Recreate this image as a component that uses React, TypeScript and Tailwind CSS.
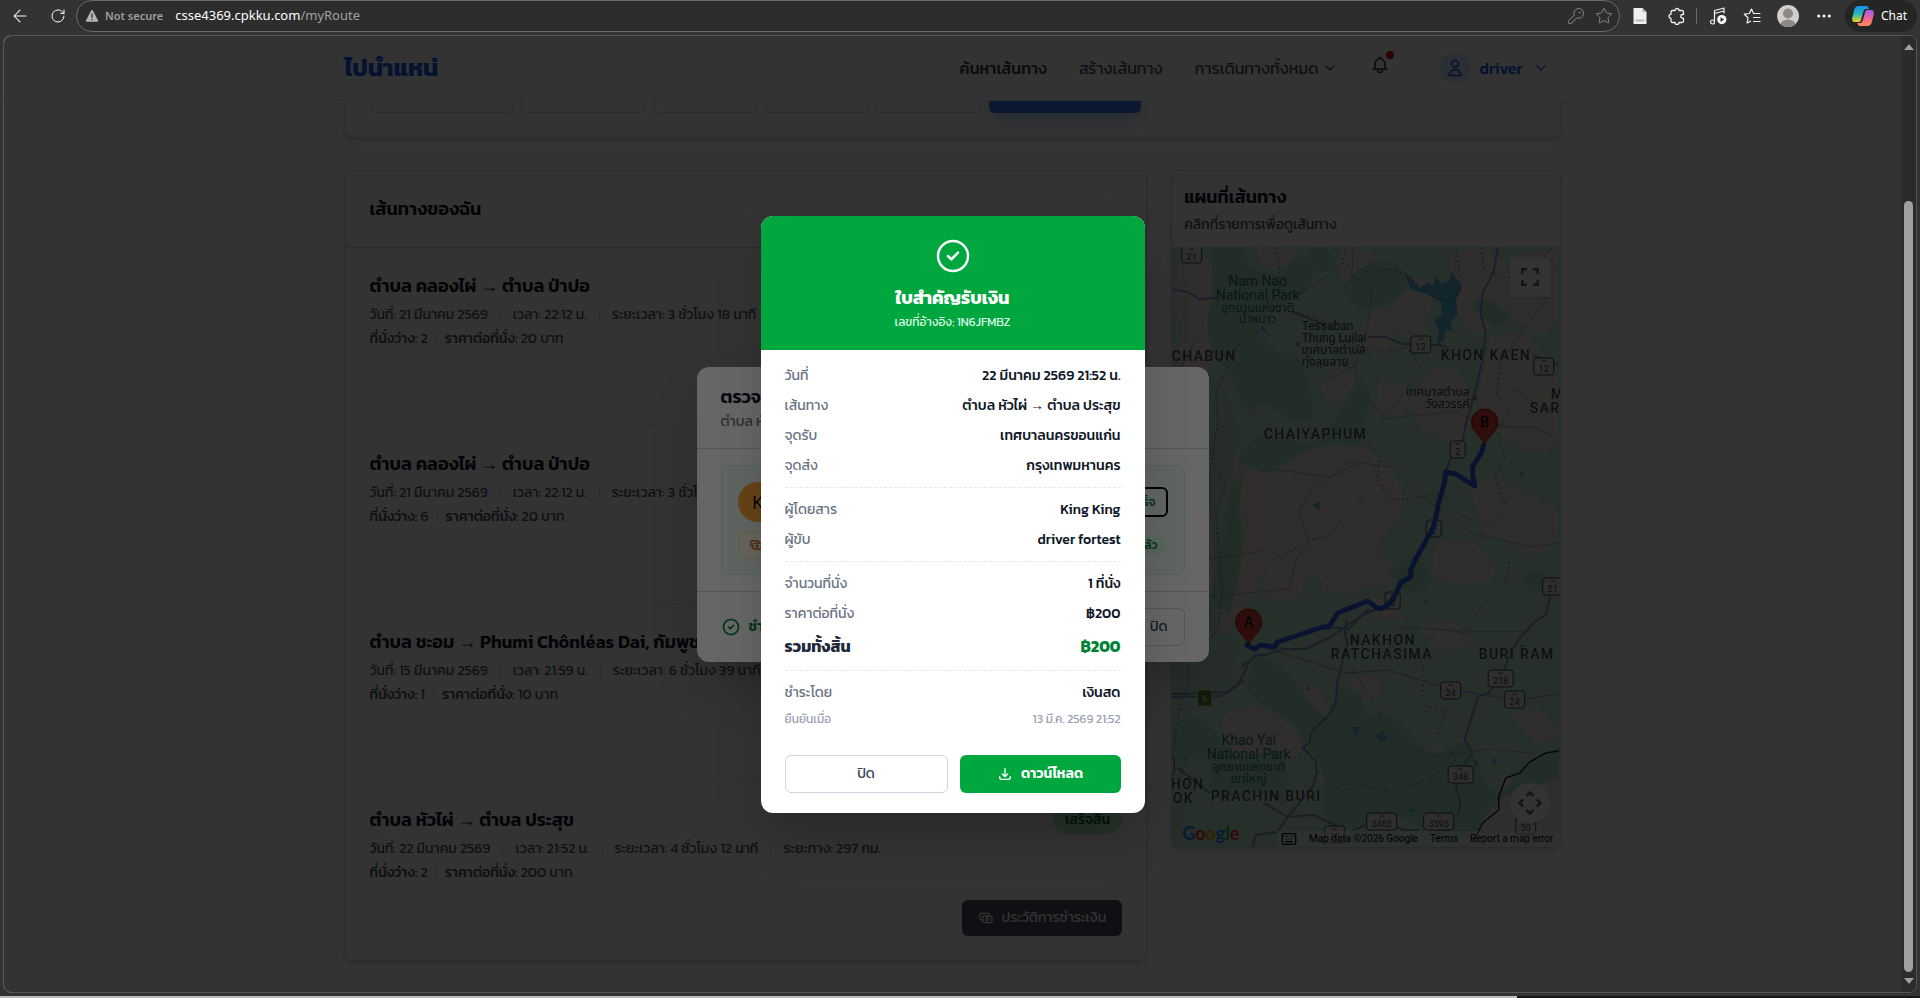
import type { ReactNode } from "react";
import {
  ArrowLeft,
  ChevronDown,
  Ellipsis,
  KeyRound,
  Keyboard,
  RotateCw,
  Star,
} from "lucide-react";

interface Trip {
  id: number;
  from: string;
  to: string;
  date: string;
  time: string;
  duration: string;
  distance: string;
  seats: number;
  price: number;
  done?: boolean;
}

const TRIPS: Trip[] = [
  { id: 1, from: "ตำบล คลองไผ่", to: "ตำบล ป่าปอ", date: "21 มีนาคม 2569", time: "22:12 น.", duration: "3 ชั่วโมง 18 นาที", distance: "", seats: 2, price: 20 },
  { id: 2, from: "ตำบล คลองไผ่", to: "ตำบล ป่าปอ", date: "21 มีนาคม 2569", time: "22:12 น.", duration: "3 ชั่วโมง 18 นาที", distance: "", seats: 6, price: 20 },
  { id: 3, from: "ตำบล ชะอม", to: "Phumi Chônléas Dai, กัมพูชา", date: "15 มีนาคม 2569", time: "21:59 น.", duration: "6 ชั่วโมง 39 นาที", distance: "", seats: 1, price: 10 },
  { id: 4, from: "ตำบล หัวไผ่", to: "ตำบล ประสุข", date: "22 มีนาคม 2569", time: "21:52 น.", duration: "4 ชั่วโมง 12 นาที", distance: "297 กม.", seats: 2, price: 200, done: true },
];

const ICONS = {
  check: "M9 12l2 2 4-4m6 2a9 9 0 11-18 0 9 9 0 0118 0z",
  bell: "M15 17h5l-1.405-1.405A2.032 2.032 0 0118 14.158V11a6.002 6.002 0 00-4-5.659V5a2 2 0 10-4 0v.341C7.67 6.165 6 8.388 6 11v3.159c0 .538-.214 1.055-.595 1.436L4 17h5m6 0v1a3 3 0 11-6 0v-1m6 0H9",
  user: "M16 7a4 4 0 11-8 0 4 4 0 018 0zM12 14a7 7 0 00-7 7h14a7 7 0 00-7-7z",
  cash: "M17 9V7a2 2 0 00-2-2H5a2 2 0 00-2 2v6a2 2 0 002 2h2m2 4h10a2 2 0 002-2v-6a2 2 0 00-2-2H9a2 2 0 00-2 2v6a2 2 0 002 2zm7-5a2 2 0 11-4 0 2 2 0 014 0z",
  download: "M4 16v1a3 3 0 003 3h10a3 3 0 003-3v-1m-4-4l-4 4m0 0l-4-4m4 4V4",
};

function Icon({ name, className, stroke = 2 }: { name: keyof typeof ICONS; className: string; stroke?: number }) {
  return (
    <svg className={className} fill="none" stroke="currentColor" viewBox="0 0 24 24" aria-hidden="true">
      <path strokeLinecap="round" strokeLinejoin="round" strokeWidth={stroke} d={ICONS[name]} />
    </svg>
  );
}

function RouteName({ from, to }: { from: string; to: string }) {
  return (
    <>
      {from} <span className="font-['Liberation_Serif',serif] font-normal">→</span> {to}
    </>
  );
}

/* ---------- Browser toolbar ---------- */

function Toolbar() {
  return (
    <div className="flex h-[35px] shrink-0 items-start text-white">
      <div className="flex h-8 w-[76px] shrink-0 items-center gap-5 pl-2.5">
        <button type="button" aria-label="Back">
          <ArrowLeft className="h-5 w-5" strokeWidth={1.25} />
        </button>
        <button type="button" aria-label="Refresh">
          <RotateCw className="h-4 w-4" strokeWidth={1.5} />
        </button>
      </div>
      <div className="flex h-8 flex-1 items-center rounded-full border border-[#6b6b6b] bg-[#2d2d2d] pr-1.5 pl-2">
        <svg className="h-3.5 w-3.5" viewBox="0 0 16 16" aria-hidden="true">
          <path d="M7.1 1.6a1 1 0 011.8 0l6 11.4a1 1 0 01-.9 1.5H2a1 1 0 01-.9-1.5z" fill="#b4b4b4" />
          <path d="M8 5.5v4.2" stroke="#2d2d2d" strokeWidth="1.4" strokeLinecap="round" />
          <circle cx="8" cy="12" r="0.9" fill="#2d2d2d" />
        </svg>
        <span className="ml-1.5 text-[11px] font-semibold text-[#a0a0a0]">Not secure</span>
        <span className="ml-3 flex-1 text-[13px] text-white">
          csse4369.cpkku.com<span className="text-[#a0a0a0]">/myRoute</span>
        </span>
        <KeyRound className="h-[18px] w-[18px] text-[#8a8a8a]" strokeWidth={1.25} />
        <Star className="ml-2.5 h-[18px] w-[18px] text-[#8a8a8a]" strokeWidth={1.25} />
      </div>
      <div className="flex h-8 w-[300px] shrink-0 items-center">
        {/* reader page */}
        <svg className="ml-3 h-4 w-4" viewBox="0 0 16 16" aria-hidden="true">
          <path d="M1.5 0h9l4 4v12h-13z" fill="#eeeeee" />
          <path d="M10.500 0v4h4z" fill="#b5b5b5" />
          <path d="M3.500 11.500h9v2h-9z" fill="#b9b9b9" />
        </svg>
        {/* extensions */}
        <svg className="ml-5 h-[18px] w-[18px]" viewBox="0 0 18 18" fill="none" stroke="#f2f2f2" strokeWidth="1.3" strokeLinejoin="round" aria-hidden="true">
          <path d="M4.500 3.500H7a2 2 0 014 0h3a1.500 1.500 0 011.500 1.500v2.500h-1a1.800 1.800 0 000 3.600h1v2.900a1.500 1.500 0 01-1.500 1.500h-3a2 2 0 01-4 0H4.500A1.500 1.500 0 013 14v-2.700a2 2 0 010-4V5a1.500 1.500 0 011.500-1.500z" />
        </svg>
        <span className="ml-2.5 h-4 w-px bg-[#6b6b6b]" />
        {/* media */}
        <svg className="ml-3 h-[18px] w-[18px]" viewBox="0 0 18 18" aria-hidden="true">
          <g fill="none" stroke="#f2f2f2" strokeWidth="1.2" strokeLinejoin="round">
            <path d="M5.500 15V3.500L15 1v5.500M5.500 6.500L15 4" />
            <circle cx="3.500" cy="15" r="2" />
          </g>
          <circle cx="12.800" cy="12.600" r="4.600" fill="#ffffff" />
          <path d="M11.500 10.300l3.600 2.300-3.600 2.300z" fill="#2d2d2d" />
        </svg>
        {/* favourites */}
        <svg className="ml-4 h-[18px] w-[18px]" viewBox="0 0 18 18" fill="none" stroke="#f2f2f2" strokeWidth="1.2" strokeLinecap="round" strokeLinejoin="round" aria-hidden="true">
          <path d="M11 6.500h-.4L8.500 2 6.300 6.500l-5 .7L5 10.800 4.100 16l3.400-1.800M11.500 6.500H17M10.500 10.500H17M10.500 14.500H17" />
        </svg>
        {/* profile */}
        <svg className="ml-4 h-[22px] w-[22px]" viewBox="0 0 22 22" aria-hidden="true">
          <clipPath id="profile">
            <circle cx="11" cy="11" r="11" />
          </clipPath>
          <g clipPath="url(#profile)">
            <path d="M0 0h22v22H0z" fill="#d3d0cc" />
            <circle cx="11" cy="8.500" r="5" fill="#8c8884" />
            <ellipse cx="11" cy="20" rx="7.500" ry="5.500" fill="#8c8884" />
          </g>
        </svg>
        <button type="button" aria-label="More" className="ml-4">
          <Ellipsis className="h-[18px] w-[18px]" strokeWidth={2} />
        </button>
        <button type="button" className="ml-3 flex h-8 items-center gap-1.5 rounded-full bg-[#252525] px-1.5 pr-2.5 text-xs">
          <svg className="h-6 w-6" viewBox="0 0 24 24" aria-hidden="true">
            <defs>
              <linearGradient id="cpA" x1="0" y1="0" x2="0" y2="1">
                <stop offset="0" stopColor="#1b8df0" />
                <stop offset="0.5" stopColor="#24b8b0" />
                <stop offset="1" stopColor="#f6d21c" />
              </linearGradient>
              <linearGradient id="cpB" x1="0" y1="0" x2="0" y2="1">
                <stop offset="0" stopColor="#9b5cf5" />
                <stop offset="0.5" stopColor="#f2629b" />
                <stop offset="1" stopColor="#ff8a4a" />
              </linearGradient>
            </defs>
            <path d="M8 2h7.500c1.500 0 2 1 2.500 3h-3c-1.500 0-2.200 1-2.600 2.400L10 16c-.5 1.500-1.300 2-2.500 2H4c-2.500 0-3.300-2-2.700-4.500l2-8C4 3 5.500 2 8 2z" fill="url(#cpA)" />
            <path d="M16 22H9c-1.500 0-2.200-1-2.700-3H9c1.500 0 2.300-1 2.700-2.400L14.200 8c.4-1.500 1.200-2 2.400-2H20c2.500 0 3.300 2 2.700 4.500l-2 8C20 21 18.500 22 16 22z" fill="url(#cpB)" />
          </svg>
          Chat
        </button>
      </div>
    </div>
  );
}

function Scrollbar() {
  return (
    <div className="flex w-[15px] shrink-0 flex-col items-center bg-[#2b2b2b] py-2">
      <svg className="h-1.5 w-2.5" viewBox="0 0 10 6" aria-hidden="true">
        <path d="M0 6l5-6 5 6z" fill="#a0a0a0" />
      </svg>
      <div className="mt-[151px] mb-1.5 w-[9px] flex-1 rounded-full bg-[#9f9f9f]" />
      <svg className="h-1.5 w-2.5" viewBox="0 0 10 6" aria-hidden="true">
        <path d="M0 0l5 6 5-6z" fill="#a0a0a0" />
      </svg>
    </div>
  );
}

/* ---------- Page ---------- */

function NavBar() {
  return (
    <header className="relative z-10 border-b border-gray-200 bg-white">
      <div className="mx-auto flex h-16 max-w-7xl items-center justify-between px-8">
        <a href="#home" className="text-2xl font-bold text-blue-600">
          ไปนำแหน่
        </a>
        <nav className="flex items-center text-gray-600">
          <a href="#find" className="font-medium text-gray-700">
            ค้นหาเส้นทาง
          </a>
          <a href="#create" className="ml-8">
            สร้างเส้นทาง
          </a>
          <button type="button" className="ml-8 flex items-center gap-1">
            การเดินทางทั้งหมด
            <ChevronDown className="h-4 w-4" />
          </button>
          <button type="button" aria-label="การแจ้งเตือน" className="relative mb-1.5 ml-8 text-gray-700">
            <Icon name="bell" className="h-5 w-5" />
            <span className="absolute -top-1 -right-1 h-2 w-2 rounded-full bg-red-600" />
          </button>
          <button type="button" className="ml-8 flex items-center rounded-md border-l border-gray-200 py-1.5 pr-3 pl-4 font-medium text-blue-600">
            <span className="flex h-8 w-8 items-center justify-center rounded-full bg-blue-100">
              <Icon name="user" className="h-5 w-5" />
            </span>
            <span className="ml-2">driver</span>
            <ChevronDown className="ml-2.5 h-4 w-4" />
          </button>
        </nav>
      </div>
    </header>
  );
}

function SearchBar() {
  const field = "h-[42px] rounded-md border border-gray-300 bg-white px-3";
  return (
    <form className="-mt-[55px] flex gap-2 rounded-lg border border-gray-300 bg-white p-6 shadow-md">
      <input aria-label="ต้นทาง" className={`${field} w-[143px]`} />
      <input aria-label="ปลายทาง" className={`${field} w-[125px]`} />
      <input aria-label="วันที่" className={`${field} w-[103px]`} />
      <input aria-label="เวลา" className={`${field} w-[103px]`} />
      <input aria-label="ที่นั่ง" className={`${field} w-[105px]`} />
      <button type="button" aria-label="ค้นหา" className="h-[42px] w-[152px] rounded-md bg-[#3478f0] shadow-lg shadow-blue-200" />
    </form>
  );
}

function Sep() {
  return <span className="h-3 w-px bg-gray-300" />;
}

function TripItem({ trip }: { trip: Trip }) {
  return (
    <li className="flex min-h-[178px] flex-col border-b border-gray-200 p-6 last:border-b-0">
      <div className="flex items-start justify-between">
        <h3 className="text-lg leading-7 font-semibold text-gray-900">
          <RouteName from={trip.from} to={trip.to} />
        </h3>
        {trip.done && (
          <span className="rounded-full bg-green-200 px-3 py-1 text-sm leading-5 font-medium text-green-800">เสร็จสิ้น</span>
        )}
      </div>
      <div className="mt-[5px] flex items-center gap-3 text-sm text-gray-600">
        <span>วันที่: {trip.date}</span>
        <Sep />
        <span>เวลา: {trip.time}</span>
        <Sep />
        <span>ระยะเวลา: {trip.duration}</span>
        {trip.distance && <Sep />}
        {trip.distance && <span>ระยะทาง: {trip.distance}</span>}
      </div>
      <div className="mt-1 flex items-center gap-2 text-sm text-gray-600">
        <span>
          <b className="font-medium">ที่นั่งว่าง:</b> {trip.seats}
        </span>
        <Sep />
        <span>
          <b className="font-medium">ราคาต่อที่นั่ง:</b> {trip.price} บาท
        </span>
      </div>
      {trip.done && (
        <button type="button" className="mt-auto flex h-9 items-center gap-2 self-end rounded-md bg-gray-600 px-4 text-sm text-white">
          <Icon name="cash" className="h-4 w-4" />
          ประวัติการชำระเงิน
        </button>
      )}
    </li>
  );
}

/* ---------- Map ---------- */

const BADGES: [number, number, string][] = [
  [21, 7, "21"], [250, 97, "12"], [373, 119, "12"], [287, 202, "2"],
  [263, 281, "2"], [222, 353, "2"], [280, 443, "24"], [330, 431, "218"], [344, 452, "24"],
  [382, 339, "21"], [290, 527, "348"], [211, 574, "3462"], [268, 574, "3395"],
  [164, 587, "33"], [-4, 518, "1"], [355, 578, "50"],
];

const REGIONS: [number, number, string][] = [
  [1, 114, "CHABUN"], [270, 113, "KHON KAEN"], [380, 152, "M"], [359, 166, "SAR"],
  [93, 192, "CHAIYAPHUM"], [179, 398, "NAKHON"], [160, 412, "RATCHASIMA"], [308, 412, "BURI RAM"],
  [0, 542, "HON"], [2, 556, "OK"], [40, 554, "PRACHIN BURI"],
];

function Pin({ x, y, label }: { x: number; y: number; label: string }) {
  return (
    <g transform={`translate(${x} ${y})`}>
      <path d="M0 0C-2-8-13-13-13-23a13 13 0 0126 0C13-13 2-8 0 0z" fill="#ea4335" stroke="#b31412" />
      <text y="-18" textAnchor="middle" className="text-sm" fill="#000">{label}</text>
    </g>
  );
}

function MapDrawing() {
  return (
    <svg className="block h-full w-full" viewBox="0 0 390 600" preserveAspectRatio="xMidYMid slice" aria-label="แผนที่เส้นทาง">
      <path d="M0 0h390v600H0z" fill="#c4ecd8" />
      {/* farmland */}
      <g fill="#f2e6e0">
        <path d="M8 16q10-14 18-10t14 8q10 10 6 26t-8 30q6 20 2 40t-6 34-14-4q-14-10-12-30t4-34q-10-12-8-28z" />
        <path d="M86 0l40 4-6 14-28 4z M170 4q20-4 30 2t8 22q-4 12-18 10t-22-12z M230 40q10-14 24-8t8 20-10 30-22 6-12-22z" />
        <path d="M280 10q24-14 40-6t20 26-10 40-26 16-22-30z M340 8l48-6v70q-14 20-28 14t-24-34z M205 60q14-2 18 8t-4 30-20 6-8-20z" />
        <path d="M320 90q26-8 40 4t28 40v60q-14 16-30 10t-36-24-12-40z M262 120q20-4 30 10t8 40-20 24-30-16-6-30z" />
        <path d="M62 220q4-24 20-24 26 10 50 8t40-6 34 12 24 34-14 40 6 34-34 24-22-20-30 10-34-16-20 30-22-8 6-60z" />
        <path d="M210 130q26 6 30 18t-10 20-26-4z M66 140q6-14 8-8t8 20-8 14z M150 140q10-20 20-18t14 6-20 32z" />
        <path d="M300 240q18-12 32-6t40 20 10 40-30 10-40-16z M170 300q32 2 34 12t-6 24-28 8-22-18z M266 296q30-8 40 2t16 24-26 14-34-16z" />
        <path d="M18 260q18-8 20 0t6 50-14 40-18-10z M96 324q26-10 30-2t6 20-28 14z M250 380q26-12 34-4t16 16-32 10z" />
        <path d="M122 438q24-2 28 6t8 20-22 8-20-16z M180 428q28-2 30 8t-6 16-26-8z M200 352q24-4 26 4t6 14-26 2z" />
        <path d="M52 470q26-16 40-8t30 18 8 24-36 10-40-16z M152 500q24-6 28 2t22 14-26 16-24-10z M236 508q28-14 34-6t10 14-34 12z" />
        <path d="M290 574l24-28 18-2-4 30-20 24h-24z M340 470q22-14 30-6t18 16-20 16z" />
        <path d="M332 532l58-26v94h-86l26-34z" />
      </g>
      {/* forest */}
      <g fill="#a8e4c0">
        <path d="M40 0h34q0 18 10 22t28 8q6-20 16-20t14 10-6 22-24 16-22 14 6 24 22 10 14 14 10 34-4 20-22-4-18-12-14 4-18-18-16-28-12-24 4-40z" />
        <path d="M184 26q20-16 34-12t18 18-18 24-30 4-16-18z M136 6q14-10 18-6t10 14-18 12z" />
        <path d="M190 132q12 12 8 24t-6 30-20 12-40 8-30 18-26-4 2-22 20-22q6 14 6 12t20 6 36-16 18-28z" />
        <path d="M302 60q6-12 14-8t18 12-12 16z M218 326q20-18 28-14t14 16-20 18z M354 332q10-12 16-8t10 12-20 10z" />
        <path d="M60 240l16-20q-10 30-6 60t-4 60-8 28-12-10 8-60z" />
        <path d="M84 406q28 14 38 26t20 26 26 16 32-6 40 20 40 12 30 24 40 0l38-22v28q-32 14-48 18t-30 30-52 6-40-14-34 10-30-24-6-40-20-30-24-22-28-24z" />
        <path d="M0 480q22-14 30-8t24 26 40 8 22 24-6 26-40-4-30-24-40-8z M170 440q22 4 22 14t0 26-20 4-14-20z" />
      </g>
      {/* water */}
      <g fill="#5fb4dc">
        <path d="M233 25l10 8 6 8 8-6 6 4 2-10 6 8 8-4 2-8 6 8 4 8-6 12 2 14-8 10 4 8-8-2-2 10-7 6 2-16-4-10 8-6-2-12-14-8-16-4z" />
        <path d="M92 78l6 10-8-6z M142 258l8-4-2 10z M205 488l8-4 4 8-8 4z M181 480l8 0-4 10z M71 416l8-4-6 8z M136 438l4 4-4 2z" />
        <path d="M303 510l4 6-2 6z M322 508l4 8-4 2z M236 562l10 0-4 4z M349 398l6 0-4 6z M350 222l3 6-3 4z M253 352l4 3-2 3z" />
      </g>
      {/* provincial borders */}
      <g fill="none" stroke="#5d6d66" strokeDasharray="2 3">
        <path d="M105 0l4 22 0 30-16 28-28 20-6 18-14 26 2 30-6 40 14 26-10 24 4 48 2 40-4 30-16 20-14 12 2 20-10 26-6 40 12 12-6 20 24 20" />
        <path d="M130 46l30-18 12-12 4-16M172 16l30 10 18-4 20 8 18 18 24 8 8-18-4-34M310 0l4 24 16 6 26 2 30-10" />
        <path d="M122 64l32 10 20 20 40 12 22-6 14 20-20 30-20 26-16 14 16 20-4 22 12 20 22 0 30-6 20 22 26 12 20-20-12-30 10-20-8-30 14-14-14-20 4-30 16-24 30-40-8-36 14-16" />
        <path d="M38 312l30-4 26-4 18 6 24-16 24-6 14-20 20-18M340 310l-6 30-24 20-14 26-30-4-18 20 6 30-4 26 26 6-10 24 20 24-24 18-40 16-28-8-24 6-20-18-16-16-20 0" />
      </g>
      {/* minor roads */}
      <g fill="none" stroke="#a3aeb8">
        <path d="M38 350l80-8 8-30 12-18-10-30 12-20 40-30 40 6 40 36 40 30 60 14 30-4M100 222l60 8 28-14M183 120l6 22 26 30 70-8 30 16 50 0 18 10" />
        <path d="M183 0l-2 28 20 12-4 40-12 38-26 14M180 420l20 30 20 40 40 20 60-8 40 4M230 380l70 4 60 0M340 140l30 20 18 4M26 90l-18 34-8 4" />
      </g>
      {/* highways */}
      <g fill="none" stroke="#8d98c4" strokeWidth="2" strokeLinejoin="round">
        <path d="M327 0l-4 25-11 21-2 20 5 20-3 27-9 37-8 28-3 15-12 18-5 14" />
        <path d="M0 42l17 3 12 7 16-1M122 65l33 13M198 90h16l18 7 37 1 8 3M362 108l26 10" />
        <path d="M0 447l58-2 9-7 11-22 7-8h10l17-6h23l23-11 34-23 16-7M0 450l50-1 24-16M158 380l20 2 20-20" />
        <path d="M176 373l-2 12 3 11-10 37-2 22-5 11-20 20-1 10-7 4 13 15 1 11-4 14-25 30-10 15-22 3-3 12" />
        <path d="M93 556l24 14 26-2 30 14M7 521l22 17 10 8" />
        <path d="M380 348l-5 20-12 7-18 21-12 27-14 22-12 5-13 43 8 12-10 15-7 20 5 16-3 12M182 583l30-10 20 10h16" />
      </g>
      <path d="M92 400l83 26 43-3 54 17 35 7 40 6 41-6M300 180l34-2" fill="none" stroke="#8d98c4" strokeWidth="1" />
      <path d="M388 504l-13 2-16 9-10 11-14 5-7 19 0 13-16 13-10 20" fill="none" stroke="#222" strokeWidth="1.500" />

      {/* road numbers */}
      {BADGES.map(([x, y, label], i) => {
        const w = label.length * 5 + 10;
        return (
          <g key={i}>
            <rect x={x - w / 2} y={y - 8} width={w} height="17" rx="3" fill="#e9e9e9" stroke="#444" />
            <path d={`M${x - 2} ${y - 5}h4`} stroke="#444" />
            <text x={x} y={y + 6} textAnchor="middle" fontSize="9" fill="#444">{label}</text>
          </g>
        );
      })}
      <rect x="27" y="443" width="14" height="16" rx="2" fill="#4f8a1d" stroke="#d8e0b0" />
      <text x="34" y="455" textAnchor="middle" fontSize="9" fill="#fff">6</text>

      {/* place names */}
      <g className="font-medium tracking-widest" fontSize="14" fill="#4c4c4c" stroke="#ffffff" strokeWidth="2" strokeOpacity="0.4" paintOrder="stroke">
        {REGIONS.map(([x, y, label]) => (
          <text key={label} x={x} y={y}>{label}</text>
        ))}
      </g>
      <g fontSize="14" fill="#27785a" textAnchor="middle">
        <text x="87" y="39">Nam Nao</text>
        <text x="87" y="53">National Park</text>
        <text x="87" y="65" fontSize="12">อุทยานแห่งชาติ</text>
        <text x="87" y="76" fontSize="12">น้ำหนาว</text>
        <text x="78" y="498">Khao Yai</text>
        <text x="78" y="512">National Park</text>
        <text x="78" y="524" fontSize="12">อุทยานแห่งชาติ</text>
        <text x="78" y="536" fontSize="12">เขาใหญ่</text>
      </g>
      <g fontSize="12" fill="#3c3c3c">
        <text x="131" y="83">Tessaban</text>
        <text x="131" y="95">Thung Luilai</text>
        <text x="131" y="107">เทศบาลตำบล</text>
        <text x="131" y="119">ทุ่งลุยลาย</text>
        <text x="299" y="149" textAnchor="end">เทศบาลตำบล</text>
        <text x="299" y="161" textAnchor="end">วังสวรรค์</text>
      </g>
      <circle cx="127" cy="97" r="1.500" fill="#fff" stroke="#444" />
      <circle cx="304" cy="151" r="1.500" fill="#fff" stroke="#444" />

      {/* route */}
      <path
        d="M313 198l-2 7-6 10-3 4v9l2 11-19-12-10-2-1 10-6 21-5 24-18 32-5 11v7l-10 6-7 15-8 9-7 2-11-8-30 12-9 14h-6l-45 15-3 5-14-2-6 4-8-4"
        fill="none"
        stroke="#2563eb"
        strokeWidth="5"
        strokeLinecap="round"
        strokeLinejoin="round"
      />
      <Pin x={314} y={198} label="B" />
      <Pin x={78} y={398} label="A" />
    </svg>
  );
}

function MapCard() {
  return (
    <section className="overflow-hidden rounded-lg border border-gray-300 bg-white shadow-md">
      <div className="p-3">
        <h2 className="text-lg leading-7 font-semibold text-gray-900">แผนที่เส้นทาง</h2>
        <p className="mt-1 text-sm text-gray-600">คลิกที่รายการเพื่อดูเส้นทาง</p>
      </div>
      <div className="relative h-[600px] font-[Roboto,'Noto_Sans_Thai',sans-serif]">
        <MapDrawing />
        <button type="button" aria-label="Fullscreen" className="absolute top-2.5 right-2.5 flex h-10 w-10 items-center justify-center bg-white shadow">
          <svg className="h-[18px] w-[18px]" viewBox="0 0 18 18" fill="none" stroke="#666" strokeWidth="2.500" aria-hidden="true">
            <path d="M1.300 6V1.300H6M12 1.300h4.700V6M16.700 12v4.700H12M6 16.700H1.300V12" />
          </svg>
        </button>
        <button type="button" aria-label="Map camera controls" className="absolute right-2.5 bottom-6 flex h-10 w-10 items-center justify-center rounded-full bg-white shadow">
          <svg className="h-6 w-6" viewBox="0 0 24 24" fill="none" stroke="#666" strokeWidth="2.500" aria-hidden="true">
            <path d="M8.500 5L12 1.500 15.500 5M8.500 19l3.500 3.500 3.500-3.500M5 8.500L1.500 12 5 15.500M19 8.500l3.500 3.500-3.500 3.500" />
          </svg>
        </button>
        <div className="absolute inset-x-0 bottom-0 flex items-end justify-between pl-2.5 text-[10px] leading-4 text-black">
          <a href="#google" aria-label="Google" className="pb-1 font-[Lato,sans-serif] text-lg leading-5 font-bold">
            <span className="text-blue-500">G</span>
            <span className="text-red-500">o</span>
            <span className="text-yellow-500">o</span>
            <span className="text-blue-500">g</span>
            <span className="text-green-500">l</span>
            <span className="text-red-500">e</span>
          </a>
          <div className="flex items-center gap-3 bg-white/50 pr-1.5 pl-1">
            <Keyboard className="h-4 w-4" />
            <span>Map data ©2026 Google</span>
            <a href="#terms">Terms</a>
            <a href="#report">Report a map error</a>
          </div>
        </div>
      </div>
    </section>
  );
}

/* ---------- Dialogs ---------- */

function PaymentDialog() {
  return (
    <div role="dialog" aria-label="ตรวจสอบการชำระเงิน" className="w-full max-w-lg rounded-xl bg-white shadow-2xl">
      <div className="border-b border-gray-300 px-6 py-4">
        <h2 className="text-lg leading-7 font-semibold text-gray-900">ตรวจสอบการชำระเงิน</h2>
        <p className="mt-px text-sm text-gray-500">ตำบล หัวไผ่ → ตำบล ประสุข</p>
      </div>
      <div className="px-6 py-4">
        <div className="rounded-lg border border-green-200 bg-green-50 p-4">
          <div className="flex items-center justify-between">
            <span className="flex h-10 w-10 items-center justify-center rounded-full bg-[#ffa938] font-['Open_Sans',sans-serif] text-lg text-black">K</span>
            <button type="button" className="h-[30px] rounded-md border-2 border-black px-2.5 text-xs font-medium text-green-700">
              ใบเสร็จ
            </button>
          </div>
          <div className="mt-2.5 flex items-center justify-between text-xs font-medium">
            <span className="flex h-[26px] items-center gap-1 rounded-md border border-yellow-200 bg-yellow-50 px-2.5 text-amber-700">
              <Icon name="cash" className="h-3.5 w-3.5" />
              เงินสด
            </span>
            <span className="rounded-full bg-green-100 px-2.5 py-0.5 text-green-700">ชำระแล้ว</span>
          </div>
        </div>
      </div>
      <div className="flex items-center justify-between border-t border-gray-300 px-6 py-4 text-sm">
        <span className="flex items-center gap-2 font-semibold text-green-700">
          <Icon name="check" className="h-5 w-5" />
          ชำระเงินครบแล้ว
        </span>
        <button type="button" className="h-[38px] rounded-md border border-gray-300 px-4 text-gray-700">
          ปิด
        </button>
      </div>
    </div>
  );
}

function Row({ label, children }: { label: string; children: ReactNode }) {
  return (
    <div className="flex justify-between">
      <dt className="text-gray-500">{label}</dt>
      <dd className="font-medium text-gray-900">{children}</dd>
    </div>
  );
}

function ReceiptDialog() {
  return (
    <div role="dialog" aria-label="ใบสำคัญรับเงิน" className="w-full max-w-sm overflow-hidden rounded-xl bg-white shadow-2xl">
      <div className="flex flex-col items-center bg-green-600 py-5 text-white">
        <Icon name="check" className="h-10 w-10" stroke={1.5} />
        <h2 className="mt-2 text-lg leading-7 font-bold">ใบสำคัญรับเงิน</h2>
        <p className="mt-0.5 text-xs text-green-100">เลขที่อ้างอิง: 1N6JFMBZ</p>
      </div>
      <dl className="px-6 pt-4 text-sm">
        <div className="flex flex-col gap-2.5">
          <Row label="วันที่">22 มีนาคม 2569 21:52 น.</Row>
          <Row label="เส้นทาง">
            <RouteName from="ตำบล หัวไผ่" to="ตำบล ประสุข" />
          </Row>
          <Row label="จุดรับ">เทศบาลนครขอนแก่น</Row>
          <Row label="จุดส่ง">กรุงเทพมหานคร</Row>
        </div>
        <div className="mt-[11px] flex flex-col gap-2.5 border-t border-dashed border-gray-200 pt-3">
          <Row label="ผู้โดยสาร">King King</Row>
          <Row label="ผู้ขับ">driver fortest</Row>
        </div>
        <div className="mt-[11px] flex flex-col gap-2.5 border-t border-dashed border-gray-200 pt-3">
          <Row label="จำนวนที่นั่ง">1 ที่นั่ง</Row>
          <Row label="ราคาต่อที่นั่ง">฿200</Row>
          <div className="flex justify-between text-base leading-6 font-bold">
            <dt className="text-gray-800">รวมทั้งสิ้น</dt>
            <dd className="text-green-700">฿200</dd>
          </div>
        </div>
        <div className="mt-3 flex flex-col gap-2 border-t border-dashed border-gray-200 pt-3">
          <Row label="ชำระโดย">เงินสด</Row>
          <div className="flex justify-between text-xs text-gray-400">
            <dt>ยืนยันเมื่อ</dt>
            <dd>13 มี.ค. 2569 21:52</dd>
          </div>
        </div>
      </dl>
      <div className="flex gap-3 px-6 pt-7 pb-5 text-sm">
        <button type="button" className="h-[38px] flex-1 rounded-md border border-gray-300 text-gray-700">
          ปิด
        </button>
        <button type="button" className="flex h-[38px] flex-1 items-center justify-center gap-2 rounded-md bg-green-600 font-semibold text-white">
          <Icon name="download" className="h-4 w-4" />
          ดาวน์โหลด
        </button>
      </div>
    </div>
  );
}

export default function App() {
  return (
    <div className="flex h-screen flex-col overflow-hidden bg-[#333333] font-['Noto_Sans','Noto_Sans_Thai',sans-serif]">
      <Toolbar />
      <div className="mx-[3px] flex min-h-0 flex-1 overflow-hidden rounded-lg border border-[#555555]">
        <div className="relative flex-1 overflow-hidden bg-white font-[Kanit,'Noto_Sans_Thai','Noto_Sans',sans-serif]">
          <NavBar />
          <main className="mx-auto max-w-7xl px-8">
            <SearchBar />
            <div className="mt-8 grid grid-cols-3 items-start gap-6">
              <section className="col-span-2 rounded-lg border border-gray-300 bg-white shadow-md">
                <h2 className="border-b border-gray-300 p-6 text-lg leading-7 font-semibold text-gray-900">เส้นทางของฉัน</h2>
                <ul>
                  {TRIPS.map((trip) => (
                    <TripItem key={trip.id} trip={trip} />
                  ))}
                </ul>
              </section>
              <MapCard />
            </div>
          </main>
          <div className="absolute inset-0 z-20 flex items-center justify-center bg-black/50">
            <PaymentDialog />
          </div>
          <div className="absolute inset-0 z-30 flex items-center justify-center bg-black/60">
            <ReceiptDialog />
          </div>
        </div>
        <Scrollbar />
      </div>
      <div className="h-[3px] shrink-0" />
      <div className="flex h-0.5 shrink-0 bg-[#141a1a]">
        <div className="w-[79%] bg-[#b9c0c0]" />
      </div>
    </div>
  );
}
